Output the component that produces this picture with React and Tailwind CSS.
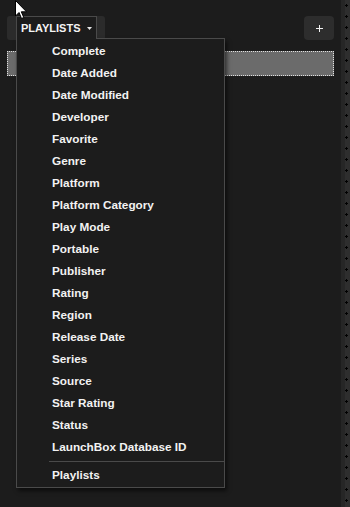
import React from "react";

const items = [
  "Complete",
  "Date Added",
  "Date Modified",
  "Developer",
  "Favorite",
  "Genre",
  "Platform",
  "Platform Category",
  "Play Mode",
  "Portable",
  "Publisher",
  "Rating",
  "Region",
  "Release Date",
  "Series",
  "Source",
  "Star Rating",
  "Status",
  "LaunchBox Database ID",
];

let Cursor = () => (
  <svg className="absolute left-[15px] top-0 z-20" width="13" height="20" viewBox="0 0 13 20">
    <path d="M0.5 0.5 L0.5 16 L4 12.5 L6.5 18.5 L8.8 17.5 L6.3 11.8 L11.5 11.8 Z" fill="#fff" stroke="#000" strokeWidth="1" />
  </svg>
);

let Scrollbar = () => (
  <div className="flex h-full w-[9px]">
    <div className="w-[4px] bg-[#262626]" />
    <div className="w-[5px] bg-[#2e2e2e]">
      <svg width="5" height="507">
        <defs>
          <pattern id="pl" width="5" height="11" patternUnits="userSpaceOnUse" y="3">
            <rect x="0" y="2" width="3" height="1" fill="#000" />
            <rect x="1" y="1" width="1" height="3" fill="#000" />
          </pattern>
        </defs>
        <rect width="5" height="507" fill="url(#pl)" />
      </svg>
    </div>
  </div>
);

let Menu = () => (
  <div className="absolute left-[16px] top-[16px] z-10 flex flex-col">
    <div className="relative z-10 -mb-px flex h-[23px] w-[81px] items-center gap-[6px] border-l border-r border-t border-[#4a4a4a] bg-[#1c1c1c] pl-[4px]">
      <span className="text-[11px] font-bold text-[#f4f4f4]">PLAYLISTS</span>
      <svg width="5" height="3" viewBox="0 0 5 3">
        <path d="M0 0 L5 0 L2.5 3 Z" fill="#e8e8e8" />
      </svg>
    </div>
    <div className="flex w-[209px] flex-col border border-[#4a4a4a] bg-[#1c1c1c] py-[1px] shadow-[2px_3px_4px_rgba(0,0,0,0.55)]">
      {items.map((item) => (
        <div key={item} className="flex h-[22px] items-center pl-[35px] text-[11.75px] font-bold text-[#f2f2f2]">
          {item}
        </div>
      ))}
      <div className="ml-[32px] mt-[3px] mb-[2px] h-px bg-[#4a4a4a]" />
      <div className="flex h-[22px] items-center pl-[35px] text-[11.75px] font-bold text-[#f2f2f2]">
        Playlists
      </div>
    </div>
  </div>
);

export default function App() {
  return (
    <div
      className="relative flex h-[507px] w-[350px] overflow-hidden bg-[#1c1c1c]"
      style={{ fontFamily: '"Liberation Sans", Arial, sans-serif' }}
    >
      <Cursor />
      <div className="flex flex-1 flex-col px-[7px] pt-[16px]">
        <div className="flex h-[24px] justify-between">
          <div className="w-[98px] rounded-[3px] bg-[#2b2b2b]" />
          <div className="flex w-[30px] items-center justify-center rounded-[4px] bg-[#2d2d2d]">
            <svg width="7" height="7" viewBox="0 0 7 7">
              <rect x="3" y="0" width="1" height="7" fill="#f2f2f2" />
              <rect x="0" y="3" width="7" height="1" fill="#f2f2f2" />
            </svg>
          </div>
        </div>
        <div className="mt-[11px] h-[25px] border border-dotted border-[#e0e0e0] bg-[#6b6b6b]" />
      </div>
      <Scrollbar />
      <Menu />
    </div>
  );
}
